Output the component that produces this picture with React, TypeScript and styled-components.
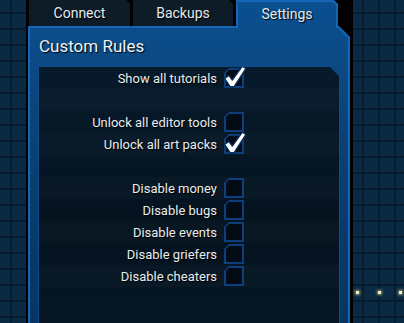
import styled, { createGlobalStyle } from 'styled-components'

const GlobalStyle = createGlobalStyle`
  html, body {
    margin: 0;
    padding: 0;
    background: #061a2b;
  }
  body {
    font-family: Roboto, "Noto Sans", sans-serif;
  }
`

type Rule = { label: string; checked: boolean } | null

const rules: Rule[] = [
  { label: 'Show all tutorials', checked: true },
  null,
  { label: 'Unlock all editor tools', checked: false },
  { label: 'Unlock all art packs', checked: true },
  null,
  { label: 'Disable money', checked: false },
  { label: 'Disable bugs', checked: false },
  { label: 'Disable events', checked: false },
  { label: 'Disable griefers', checked: false },
  { label: 'Disable cheaters', checked: false },
]

const tabs = [
  { name: 'Connect', width: 101, active: false },
  { name: 'Backups', width: 100, active: false },
  { name: 'Settings', width: 102, active: true },
]

const CheckMark = () => (
  <CheckSvg viewBox="0 0 24 24" width="24" height="24">
    <path
      d="M1.5 13.5 L6 10.5 L9.3 15 L19.3 1.2 L23 3.3 L11 21.8 L7.3 21.8 Z"
      fill="#ffffff"
      stroke="#0a2c55"
      strokeWidth="1.4"
      strokeLinejoin="round"
    />
  </CheckSvg>
)

export default function App() {
  return (
    <Page>
      <GlobalStyle />
      <Column>
        <TabRow>
          {tabs.map((tab) => (
            <Tab key={tab.name} width={tab.width} active={tab.active}>
              <TabFill active={tab.active}>{tab.name}</TabFill>
            </Tab>
          ))}
        </TabRow>
        <Panel>
          <PanelBody>
            <Title>Custom Rules</Title>
            <RulesFrame>
              <RulesBody>
                {rules.map((rule, i) => (
                  <Row key={i} striped={i % 2 === 1}>
                    {rule && (
                      <>
                        <Label>{rule.label}</Label>
                        <Box>
                          <BoxFrame>
                            <BoxFill />
                          </BoxFrame>
                          {rule.checked && <CheckMark />}
                        </Box>
                      </>
                    )}
                  </Row>
                ))}
              </RulesBody>
            </RulesFrame>
          </PanelBody>
        </Panel>
      </Column>
      <Dot style={{ left: 356, top: 291 }} />
      <Dot style={{ left: 378, top: 291 }} />
      <Dot style={{ left: 399, top: 291 }} />
    </Page>
  )
}

const Page = styled.div`
  position: relative;
  width: 404px;
  height: 323px;
  overflow: hidden;
  display: flex;
  background-color: #0a2943;
  background-image:
    linear-gradient(to right, #071b2c 2px, transparent 2px),
    linear-gradient(to bottom, #071b2c 2px, transparent 2px);
  background-size: 16px 16px;
  background-position: 10px 12px;
`

const Column = styled.div`
  margin-left: 26px;
  width: 327px;
  height: 100%;
  background: #000;
  display: flex;
  flex-direction: column;
  padding: 0 3px 0 2px;
  box-sizing: border-box;
`

const TabRow = styled.div`
  display: flex;
  gap: 3px;
  height: 26px;
  padding-left: 1px;
`

const Tab = styled.div<{ width: number; active: boolean }>`
  position: relative;
  z-index: 1;
  width: ${({ width }) => width}px;
  margin-bottom: ${({ active }) => (active ? '-2px' : '0')};
  padding: ${({ active }) => (active ? '2px 2px 0 2px' : '0')};
  box-sizing: border-box;
  background: ${({ active }) => (active ? '#1666b8' : '#0d1c27')};
  clip-path: polygon(0 0, calc(100% - 4px) 0, 100% 4px, 100% 100%, 0 100%);
  display: flex;
`

const TabFill = styled.div<{ active: boolean }>`
  flex: 1;
  display: flex;
  align-items: center;
  justify-content: center;
  padding-bottom: ${({ active }) => (active ? '2px' : '0')};
  background: ${({ active }) =>
    active ? 'linear-gradient(#0b4f90, #0b4d8c)' : '#0d1c27'};
  clip-path: polygon(0 0, calc(100% - 3px) 0, 100% 3px, 100% 100%, 0 100%);
  color: #e4eaee;
  font-size: 14px;
  text-shadow: 1px 1px 1px #000;
`

const Panel = styled.div`
  flex: 1;
  width: 322px;
  display: flex;
  padding: 2px 2px 0 2px;
  box-sizing: border-box;
  background: #1666b8;
  clip-path: polygon(0 0, calc(100% - 11px) 0, 100% 11px, 100% 100%, 0 100%);
`

const PanelBody = styled.div`
  flex: 1;
  display: flex;
  flex-direction: column;
  padding: 0 8px;
  background: linear-gradient(#0b4d8c, #0a4478 30%, #083a6b 70%, #083563);
  clip-path: polygon(0 0, calc(100% - 10px) 0, 100% 10px, 100% 100%, 0 100%);
`

const Title = styled.div`
  height: 38px;
  display: flex;
  align-items: center;
  padding-left: 1px;
  padding-bottom: 2px;
  box-sizing: border-box;
  color: #eef3f6;
  font-size: 17px;
  text-shadow: 1px 1px 1px #000;
`

const RulesFrame = styled.div`
  flex: 1;
  display: flex;
  padding: 1px 1px 0 1px;
  background: #0e4b8c;
  clip-path: polygon(0 0, calc(100% - 10px) 0, 100% 10px, 100% 100%, 0 100%);
`

const RulesBody = styled.div`
  flex: 1;
  display: flex;
  flex-direction: column;
  background: linear-gradient(#071a2b, #05131f 60%, #061624);
  clip-path: polygon(0 0, calc(100% - 9px) 0, 100% 9px, 100% 100%, 0 100%);
`

const Row = styled.div<{ striped: boolean }>`
  height: 22px;
  display: grid;
  grid-template-columns: 178px 20px;
  column-gap: 7px;
  align-items: center;
  background: ${({ striped }) => (striped ? 'rgba(255,255,255,0.02)' : 'transparent')};
`

const Label = styled.span`
  text-align: right;
  color: #e6ecef;
  font-size: 13px;
  white-space: nowrap;
  text-shadow: 1px 1px 1px #000;
`

const Box = styled.div`
  position: relative;
  width: 20px;
  height: 20px;
  display: flex;
`

const BoxFrame = styled.div`
  flex: 1;
  display: flex;
  padding: 2px;
  background: #0c3f7c;
  clip-path: polygon(5px 0, 100% 0, 100% 100%, 0 100%, 0 5px);
`

const BoxFill = styled.div`
  flex: 1;
  background: #030b14;
  clip-path: polygon(3px 0, 100% 0, 100% 100%, 0 100%, 0 3px);
`

const CheckSvg = styled.svg`
  position: absolute;
  left: -1px;
  top: -3px;
`

const Dot = styled.span`
  position: absolute;
  width: 3px;
  height: 3px;
  background: #f4f0c0;
  box-shadow: 0 0 3px 1px rgba(240, 230, 150, 0.6);
`
